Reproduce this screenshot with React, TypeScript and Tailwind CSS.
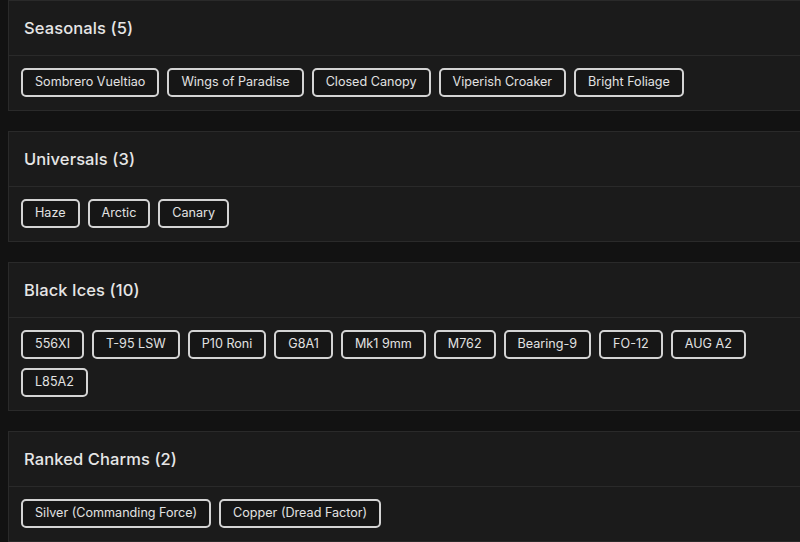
import React from "react";

const sections: { title: string; items: string[] }[] = [
  { title: "Seasonals (5)", items: ["Sombrero Vueltiao", "Wings of Paradise", "Closed Canopy", "Viperish Croaker", "Bright Foliage"] },
  { title: "Universals (3)", items: ["Haze", "Arctic", "Canary"] },
  { title: "Black Ices (10)", items: ["556XI", "T-95 LSW", "P10 Roni", "G8A1", "Mk1 9mm", "M762", "Bearing-9", "FO-12", "AUG A2", "L85A2"] },
  { title: "Ranked Charms (2)", items: ["Silver (Commanding Force)", "Copper (Dread Factor)"] },
];

export default function App() {
  return (
    <div className="w-[800px] h-[542px] overflow-hidden bg-[#121212] font-['Inter',sans-serif]">
      <div className="ml-2 -mr-4 flex flex-col gap-[20px]">
        {sections.map((s) => (
          <div key={s.title} className="bg-[#1b1b1b] border border-[#2a2a2a]">
            <div className="h-[55px] flex items-center px-[15px] border-b border-[#2a2a2a]">
              <h2 className="text-[16.5px] font-medium text-[#e6e6e6] tracking-[0.1px]">{s.title}</h2>
            </div>
            <div className="px-3 pt-3 pb-[13px] flex flex-wrap gap-x-2 gap-y-[9px]">
              {s.items.map((it) => (
                <span
                  key={it}
                  className="h-[29px] flex items-center px-3 border-2 border-[#d4d4d4] rounded-[5px] text-[12.6px] text-[#e2e2e2] bg-[#161616]"
                >
                  {it}
                </span>
              ))}
            </div>
          </div>
        ))}
      </div>
    </div>
  );
}
